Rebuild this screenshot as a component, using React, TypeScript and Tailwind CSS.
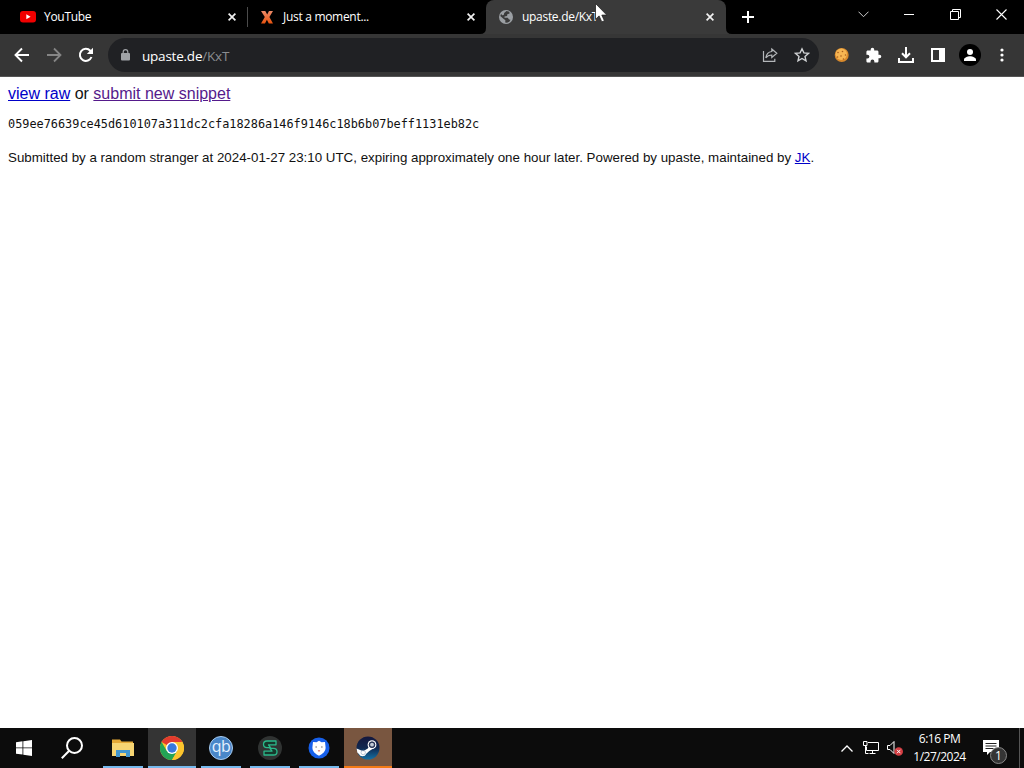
import type { ReactNode } from "react";

const Close = () => (
  <svg className="w-2 h-2 shrink-0" viewBox="0 0 8 8" stroke="#f1f1f1" strokeWidth="1.7">
    <path d="M.6.6l6.8 6.8M7.4.6L.6 7.4" />
  </svg>
);

const Tab = (props: { icon: ReactNode; title: ReactNode; className: string }) => {
  const { icon, title, className } = props;

  return (
    <div className={`flex items-center h-[34px] shrink-0 ${className}`}>
      <span className="w-4 h-4 flex items-center justify-center shrink-0">{icon}</span>
      <span className="ml-2 flex-1 whitespace-nowrap">{title}</span>
      <Close />
    </div>
  );
};

const YouTubeIcon = () => (
  <svg className="w-4 h-3" viewBox="0 0 16 12">
    <rect width="16" height="11.5" rx="3" fill="#f00000" />
    <path d="M6.3 3.3v5l4.3-2.5z" fill="#fff" />
  </svg>
);

const XIcon = () => (
  <svg className="w-4 h-4" viewBox="0 0 16 16">
    <defs>
      <linearGradient id="xg" x2="0" y2="1">
        <stop offset="0" stopColor="#ec8a68" />
        <stop offset="1" stopColor="#e8530f" />
      </linearGradient>
    </defs>
    <path d="M2 2h4.3L8.2 5.500 10 2h4l-3.600 6L14 14.500H9.800L7.900 10.800 6 14.500H2L5.800 8z" fill="url(#xg)" />
  </svg>
);

const GlobeIcon = () => (
  <svg className="w-4 h-4" viewBox="0 0 16 16">
    <circle cx="8" cy="8" r="7" fill="#9b9fa3" />
    <path d="M8.500 2l2.800.8.300 1.700-2.300.8-.2 1.700-2.600.5v1.300h3.300l1.200 1.800 1.500.2-1.200 1.900-2.300 1-1.800-.200.2-2.300-2-1.500L2.300 7l.8-2.200 1 1.500 1.600-.3.500-2z" fill="#3b3b3b" />
  </svg>
);

const TabStrip = () => (
  <div className="flex h-[34px] bg-black text-white text-[12px] tracking-[-0.3px] relative">
    <Tab className="w-[247px] pl-5 pr-[11px]" icon={<YouTubeIcon />} title="YouTube" />
    <div className="w-px h-5 mt-[7px] bg-[#4b4b4b]" />
    <Tab className="w-[238px] pl-[11px] pr-[11px]" icon={<XIcon />} title="Just a moment..." />
    <div className="relative">
      <Tab className="w-60 pl-3 pr-3 bg-[#3a3a3a] rounded-t-lg" icon={<GlobeIcon />} title="upaste.de/KxT" />
      <svg className="absolute -left-1.5 bottom-0 w-1.5 h-1.5" viewBox="0 0 6 6">
        <path d="M6 0v6H0Q6 6 6 0" fill="#3a3a3a" />
      </svg>
      <svg className="absolute -right-1.5 bottom-0 w-1.5 h-1.5" viewBox="0 0 6 6">
        <path d="M0 0v6h6Q0 6 0 0" fill="#3a3a3a" />
      </svg>
    </div>
    <svg className="w-3 h-3 ml-4 mt-[11px]" viewBox="0 0 12 12" stroke="#fff" strokeWidth="2">
      <path d="M6 0v12M0 6h12" />
    </svg>
    <div className="ml-auto flex h-[29px] items-center pr-[17px] gap-9">
      <svg className="w-[11px] h-[7px]" viewBox="0 0 11 7" fill="none" stroke="#ccc">
        <path d="M.5.7l5 5 5-5" />
      </svg>
      <div className="w-2.5 h-px bg-white ml-[-1px]" />
      <svg className="w-[11px] h-[11px]" viewBox="0 0 11 11" fill="none" stroke="#fff">
        <path d="M.5 2.500h8v8h-8zM2.500 2V.5h8v8H9" />
      </svg>
      <svg className="w-[11px] h-[11px] ml-[-1px]" viewBox="0 0 11 11" stroke="#fff" strokeWidth="1.1">
        <path d="M.5.5l10 10M10.500.5l-10 10" />
      </svg>
    </div>
    <svg className="absolute left-[595px] top-[3px] w-3.5 h-5" viewBox="0 0 14 20">
      <path d="M.5.5v15.800l3.600-3.400 2.700 6 2.600-1.200-2.600-5.600h5z" fill="#fff" stroke="#222" strokeWidth=".8" />
    </svg>
  </div>
);

const Toolbar = () => (
  <div className="flex items-center h-[43px] bg-[#363636] border-b border-[#555] text-white">
    <svg className="w-4 h-4 ml-3.5" viewBox="0 0 16 16" fill="none" stroke="#fff" strokeWidth="1.900">
      <path d="M15 8H2M8 1.500L1.500 8 8 14.500" />
    </svg>
    <svg className="w-4 h-4 ml-4" viewBox="0 0 16 16" fill="none" stroke="#858585" strokeWidth="1.800">
      <path d="M1 8h13M8 1.500L14.500 8 8 14.500" />
    </svg>
    <svg className="w-4 h-4 ml-4" viewBox="0 0 16 16">
      <path d="M13.500 10A6 6 0 1 1 12.300 3.800L14 5.500" fill="none" stroke="#fff" strokeWidth="2" />
      <path d="M15 .8V7H8.800z" fill="#fff" />
    </svg>
    <div className="ml-3.5 w-[711px] h-[34px] rounded-full bg-[#202124] flex items-center pl-[13px] pr-[9px]">
      <svg className="w-[9px] h-3" viewBox="0 0 9 12">
        <rect y="4" width="9" height="7.500" rx="1" fill="#a0a3a7" />
        <path d="M2.200 5V3a2.300 2.300 0 0 1 4.600 0v2" fill="none" stroke="#a0a3a7" strokeWidth="1.200" />
      </svg>
      <span className="ml-3 mt-px text-[13.5px] leading-5 tracking-[-0.22px]">
        upaste.de<span className="text-[#8b8d90]">/KxT</span>
      </span>
      <svg className="ml-auto w-4 h-4" viewBox="0 0 16 16" fill="none" stroke="#b4b7ba" strokeWidth="1.200">
        <path d="M1.500 4v10.400h11.300v-2.700" />
        <path d="M9.800 2l5 4.200-5 4.200V8C7 8 5.200 8.900 3.800 10.800 4.300 7.500 6.200 5 9.800 4.500z" />
      </svg>
      <svg className="ml-4 w-4 h-4" viewBox="0 0 16 16" fill="none" stroke="#d0d2d4" strokeWidth="1.400">
        <path d="M8 1.800l1.900 4.100 4.500.5L11 9.400l1 4.500-4-2.400-4 2.400 1-4.500L1.600 6.400l4.500-.5z" />
      </svg>
    </div>
    <div className="flex items-center ml-3.5">
      <svg className="w-4 h-4" viewBox="0 0 16 16">
        <circle cx="8.700" cy="8" r="7" fill="#d98a2c" />
        <circle cx="8.300" cy="7.300" r="5.700" fill="#f6b552" />
        <g fill="#a85c1c">
          <circle cx="5" cy="5.500" r=".8" />
          <circle cx="9.500" cy="4.500" r=".8" />
          <circle cx="12.500" cy="8" r=".8" />
          <circle cx="8" cy="9" r=".8" />
          <circle cx="4.500" cy="10" r=".8" />
          <circle cx="10.500" cy="12" r=".8" />
        </g>
      </svg>
      <svg className="ml-4 w-[17px] h-[17px]" viewBox="0 0 24 24" fill="#fff">
        <path d="M20.500 11H19V7c0-1.100-.9-2-2-2h-4V3.500a2.500 2.500 0 0 0-5 0V5H4c-1.100 0-2 .9-2 2v3.800h1.500a2.700 2.700 0 0 1 0 5.400H2V20c0 1.100.9 2 2 2h3.800v-1.500a2.700 2.700 0 0 1 5.400 0V22H17c1.100 0 2-.9 2-2v-4h1.500a2.500 2.500 0 0 0 0-5z" />
      </svg>
      <svg className="ml-4 w-4 h-4" viewBox="0 0 16 16" fill="none" stroke="#fff" strokeWidth="2">
        <path d="M8 0v10M4 6.300l4 4 4-4M1 11v4h14v-4" />
      </svg>
      <svg className="ml-[17px] w-3.5 h-3.5" viewBox="0 0 14 14">
        <path d="M0 0h14v14H0zM2 2v10h6V2z" fill="#fff" fillRule="evenodd" />
      </svg>
      <svg className="ml-3.5 w-[22px] h-[22px]" viewBox="0 0 22 22">
        <circle cx="11" cy="11" r="11" fill="#000" />
        <circle cx="11" cy="8" r="3" fill="#fff" />
        <path d="M5 17v-1.500c0-2 3.500-3.300 6-3.300s6 1.300 6 3.300V17z" fill="#fff" />
      </svg>
      <svg className="ml-[19px] w-1 h-3.5" viewBox="0 0 4 14" fill="#fff">
        <circle cx="2" cy="2" r="1.600" />
        <circle cx="2" cy="7" r="1.600" />
        <circle cx="2" cy="12" r="1.600" />
      </svg>
    </div>
  </div>
);

const Page = () => (
  <main className="flex-1 px-2 pt-2 text-[#111] font-['Liberation_Sans',sans-serif]">
    <p className="text-[16px] leading-[18px]">
      <a href="#raw" className="text-[#0000c8] underline">view raw</a> or{" "}
      <a href="#new" className="text-[#551a8b] underline">submit new snippet</a>
    </p>
    <pre className="mt-[13px] text-[11.87px] leading-4 font-['DejaVu_Sans_Mono',monospace]">
      059ee76639ce45d610107a311dc2cfa18286a146f9146c18b6b07beff1131eb82c
    </pre>
    <p className="mt-[18px] text-[13.33px] leading-4 whitespace-nowrap">
      Submitted by a random stranger at 2024-01-27 23:10 UTC, expiring approximately one hour later. Powered by upaste, maintained by{" "}
      <a href="#jk" className="text-[#0000c8] underline">JK</a>.
    </p>
  </main>
);

const ChromeIcon = () => (
  <svg className="w-6 h-6" viewBox="0 0 24 24">
    <circle cx="12" cy="12" r="12" fill="#fbc42d" />
    <path d="M12 12L1.600 6A12 12 0 0 1 22.400 6H12z" fill="#e33b2e" />
    <path d="M1.600 6A12 12 0 0 0 12 24l5.200-9L12 12 6.800 15z" fill="#23a455" />
    <path d="M22.400 6H12l5.200 9L12 24A12 12 0 0 0 22.400 6" fill="#fbc42d" />
    <circle cx="12" cy="12" r="6" fill="#fff" />
    <circle cx="12" cy="12" r="4.700" fill="#3879dc" />
  </svg>
);

const SteamIcon = () => (
  <svg className="w-6 h-6" viewBox="0 0 24 24">
    <defs>
      <linearGradient id="sg" x2="0" y2="1">
        <stop offset="0" stopColor="#14173d" />
        <stop offset=".5" stopColor="#102850" />
        <stop offset="1" stopColor="#1471a5" />
      </linearGradient>
    </defs>
    <circle cx="12" cy="12" r="11.500" fill="url(#sg)" />
    <path d="M.6 12.500l6.500 2.700 4.700-2.700 3-5 4.500 3.800-6 3.800-3 2.600a4 4 0 0 1-7.400.2L1.300 16.500z" fill="#fff" />
    <circle cx="16" cy="8.700" r="4.400" fill="#fff" />
    <circle cx="16" cy="8.700" r="2.900" fill="#263659" stroke="#182345" strokeWidth=".8" />
    <circle cx="16" cy="8.700" r="1.900" fill="#c4ccd7" />
    <circle cx="7.200" cy="16.500" r="2.200" fill="none" stroke="#9fb0c4" strokeWidth=".7" />
  </svg>
);

const apps = [
  {
    name: "files",
    className: "w-10 border-[#76b9ed]",
    icon: (
      <svg className="w-[22px] h-[18px]" viewBox="0 0 22 18">
        <path d="M0 .5h8l1.500 2H21V17H0z" fill="#e5a936" />
        <path d="M0 4h22v13H0z" fill="#f7d573" />
        <path d="M4 18v-7h14v7h-4v-4H8v4z" fill="#4296cf" />
      </svg>
    ),
  },
  { name: "chrome", className: "w-12 ml-[5px] bg-[#343434] border-[#76b9ed]", icon: <ChromeIcon /> },
  {
    name: "qb",
    className: "w-10 ml-[5px] border-[#76b9ed]",
    icon: (
      <div className="w-6 h-6 rounded-full bg-[#4a87c9] border border-[#a9cdf1] text-[#e5f1ff] text-[16px] leading-[19px] tracking-[-0.5px] text-center">
        qb
      </div>
    ),
  },
  {
    name: "s",
    className: "w-10 ml-[9px] border-[#76b9ed]",
    icon: (
      <svg className="w-6 h-6" viewBox="0 0 24 24">
        <circle cx="12" cy="12" r="12" fill="#303332" />
        <path
          d="M18 8.800V5H9Q5.500 5 5.500 8.300T9 11.600h2.500l2.500 3.600H6V19h9.500Q19 19 19 15.700T15.500 12.400H13L10.500 8.800z"
          fill="#17382c"
          stroke="#2ab98a"
          strokeWidth="1.300"
          strokeLinejoin="round"
        />
      </svg>
    ),
  },
  {
    name: "shield",
    className: "w-10 ml-[9px] border-[#76b9ed]",
    icon: (
      <svg className="w-[22px] h-[22px]" viewBox="0 0 22 22">
        <circle cx="11" cy="11" r="10.500" fill="#1760ea" />
        <path d="M5 5l3.500.3L11 3.800l2.500 1.500L17 5l.6 5.500c0 4-2.800 6.300-6.600 8.300-3.800-2-6.600-4.300-6.600-8.300z" fill="#fff" />
        <path d="M7.500 10h1.300M13.200 10h1.300" stroke="#555" strokeWidth="1.200" />
        <path d="M9.700 13.200h2.600L11 15z" fill="#d9645d" />
      </svg>
    ),
  },
  { name: "steam", className: "w-12 ml-[5px] bg-[#795640] border-[#f47a16]", icon: <SteamIcon /> },
];

const Tray = () => (
  <div className="ml-auto flex items-center">
    <svg className="w-3 h-[7px]" viewBox="0 0 12 7" fill="none" stroke="#fff" strokeWidth="1.300">
      <path d="M.5 6.500L6 1l5.500 5.500" />
    </svg>
    <svg className="ml-2.5 w-4 h-3.5" viewBox="0 0 16 14" fill="none" stroke="#fff">
      <path d="M5 1.500h10.500v8H3.500v-4M6.500 12.500h6M9.500 10v2.500M.5.5H4v4H.5zM2.500 5v7.500h3" />
    </svg>
    <svg className="ml-2 w-4 h-4" viewBox="0 0 16 16">
      <path d="M.5 5.500H3l4-4v12l-4-4H.5z" fill="none" stroke="#fff" />
      <circle cx="11.700" cy="11.500" r="4.300" fill="#d33d42" />
      <path d="M10 9.800l3.400 3.400M13.400 9.800l-3.400 3.400" stroke="#fff" strokeWidth="1" />
    </svg>
    <div className="w-[73px] text-center text-[12px] leading-[18px] tracking-[-0.5px] text-white">
      <div>6:16 PM</div>
      <div>1/27/2024</div>
    </div>
    <div className="relative ml-[7px] w-[41px] h-10">
      <svg className="absolute left-0 top-3 w-4 h-4" viewBox="0 0 16 16">
        <path d="M0 0h16v12H7l-3 3v-3H0z" fill="#fff" />
        <path d="M2.500 3.500h11M2.500 6h11M2.500 8.500h8" stroke="#222" />
      </svg>
      <div className="absolute left-[7px] top-[19px] w-[17px] h-[17px] rounded-full bg-[#353535] border border-[#888] text-white text-[12px] leading-[15px] text-center">
        1
      </div>
      <div className="absolute right-1 top-0 w-px h-10 bg-[#555]" />
    </div>
  </div>
);

const Taskbar = () => (
  <div className="flex items-center h-10 bg-[#0c0c0c]">
    <svg className="w-4 h-4 ml-4" viewBox="0 0 16 16" fill="#fff">
      <path d="M0 2.300L6.500 1.300v6.200H0zM7.300 1.200L16 0v7.500H7.300zM0 8.300h6.500v6.300L0 13.700zM7.300 8.300H16V16l-8.700-1.300z" />
    </svg>
    <svg className="w-[22px] h-[22px] ml-[29px]" viewBox="0 0 22 22" fill="none" stroke="#fff" strokeWidth="2">
      <circle cx="13.500" cy="8.500" r="7.500" />
      <path d="M8.200 13.800L.8 21.300" />
    </svg>
    <div className="flex ml-5">
      {apps.map((app) => (
        <div key={app.name} className={`h-10 pt-[2px] flex items-center justify-center border-b-2 ${app.className}`}>
          {app.icon}
        </div>
      ))}
    </div>
    <Tray />
  </div>
);

const App = () => {
  return (
    <div className="w-[1024px] h-[768px] flex flex-col overflow-hidden bg-white font-['Open_Sans',sans-serif]">
      <TabStrip />
      <Toolbar />
      <Page />
      <Taskbar />
    </div>
  );
};

export default App;
